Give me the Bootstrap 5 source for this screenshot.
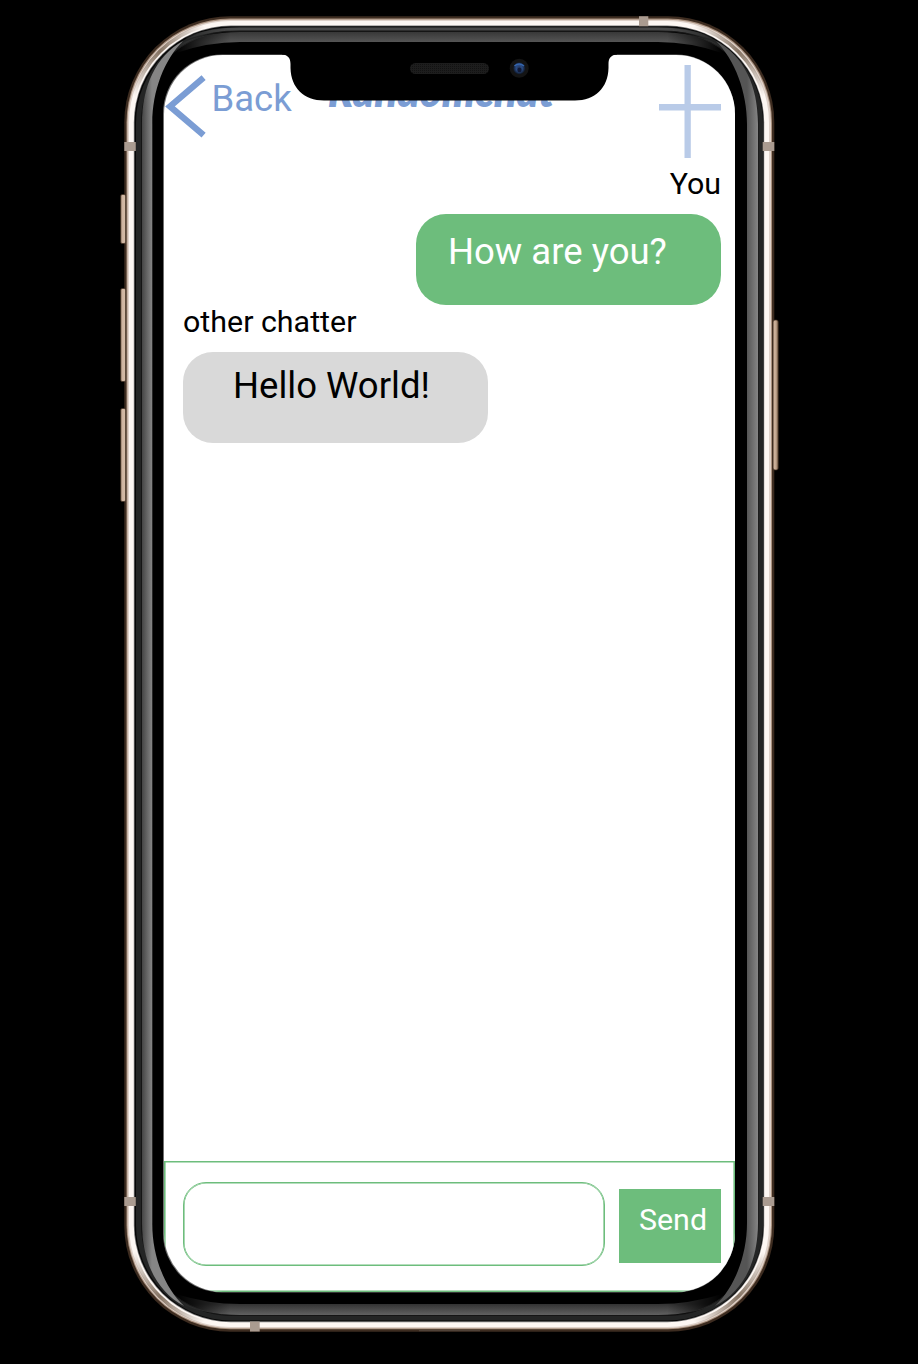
<!DOCTYPE html>
<html lang="en">
<head>
<meta charset="utf-8">
<meta name="viewport" content="width=device-width, initial-scale=1">
<title>Randomchat</title>
<link href="https://cdn.jsdelivr.net/npm/bootstrap@5.3.0/dist/css/bootstrap.min.css" rel="stylesheet">
<style>
  :root { --leaf: #6dbd7c; --sky: #7b9dd4; }
  body { background: #000; font-family: Roboto, sans-serif; color: #000; overflow: hidden; }
  .phone { width: 650px; height: 1316px; margin: 16px 0 0 124px; padding: 39px 39.5px 40px; }
  .phone-frame { left: -124px; top: -16px; pointer-events: none; }
  .screen { border-radius: 59px; background: #fff; }
  .topbar { height: 111.5px; color: var(--sky); }
  .back-link { color: var(--sky); }
  .back-label { font-size: 36.5px; line-height: 42px; margin: 23px 0 0 5px; }
  .app-title { font: italic 800 41.5px/48px Lato, sans-serif; margin: 12px 0 0 36px; white-space: nowrap; }
  .add-btn { margin: 10px 13.5px 0 auto; }
  .thread { padding: 0 13.5px 0 19.5px; }
  .author { font-size: 30.4px; line-height: 34px; }
  .bubble { width: 305px; height: 91px; border-radius: 30px; font-size: 36.5px; line-height: 42px; white-space: nowrap; }
  .bubble-me { background: var(--leaf); color: #fff; padding: 17px 0 0 32px; margin-top: 13.3px; }
  .bubble-other { background: #d9d9d9; padding: 13px 0 0 50px; margin-top: 13.2px; }
  .composer { height: 131px; border: 1px solid var(--leaf); box-shadow: inset 0 0 0 .6px var(--leaf); padding: 20px 12.5px 0 18.5px; }
  .composer .form-control { width: 422px; height: 84px; border: 1px solid var(--leaf); box-shadow: inset 0 0 0 .6px var(--leaf); border-radius: 23px; }
  .send-btn { width: 102px; height: 74px; margin: 7px 0 0 14px; background: var(--leaf); color: #fff; font-size: 30.4px; line-height: 34px; border: 0; border-radius: 0; padding: 0 0 13px 6px; }
</style>
</head>
<body>
<main class="phone position-relative">
  <div class="screen d-flex flex-column w-100 h-100 overflow-hidden position-relative z-1">
    <header class="topbar d-flex align-items-start flex-shrink-0">
      <a href="#" class="back-link d-flex align-items-start text-decoration-none">
        <svg width="43" height="90" viewBox="0 0 43 90" fill="none" stroke="#7b9dd4" stroke-width="6.3"><path d="M39.6 22.6 6 51.4 39.6 80.2"/></svg>
        <span class="back-label">Back</span>
      </a>
      <h1 class="app-title">Randomchat</h1>
      <svg class="add-btn" width="62" height="94" viewBox="0 0 62 94" fill="#b9cbe8"><path d="M25.5 0h6.3v93h-6.3zM0 39h62v6.4H0z"/></svg>
    </header>
    <section class="thread d-flex flex-column flex-grow-1">
      <div class="author align-self-end">You</div>
      <div class="bubble bubble-me align-self-end">How are you?</div>
      <div class="author align-self-start">other chatter</div>
      <div class="bubble bubble-other align-self-start">Hello World!</div>
    </section>
    <form class="composer d-flex align-items-start flex-shrink-0">
      <input type="text" class="form-control flex-shrink-0" aria-label="Message">
      <button type="button" class="btn send-btn flex-shrink-0">Send</button>
    </form>
  </div>

  <!-- phone body -->
  <svg class="phone-frame position-absolute" width="918" height="1364" viewBox="0 0 918 1364">
    <defs>
      <linearGradient id="side-l" gradientUnits="userSpaceOnUse" x1="142" x2="152"><stop stop-color="#454545"/><stop offset="1" stop-color="#858585"/></linearGradient>
      <linearGradient id="side-r" gradientUnits="userSpaceOnUse" x1="747" x2="758"><stop stop-color="#555"/><stop offset="1" stop-color="#858585"/></linearGradient>
      <linearGradient id="band-t" gradientUnits="userSpaceOnUse" x1="0" x2="0" y1="32" y2="42"><stop stop-color="#383838"/><stop offset="1" stop-color="#555"/></linearGradient>
      <linearGradient id="band-b" gradientUnits="userSpaceOnUse" x1="0" x2="0" y1="1304" y2="1315"><stop stop-color="#333"/><stop offset="1" stop-color="#616161"/></linearGradient>
      <linearGradient id="fade" gradientUnits="userSpaceOnUse" x1="176" x2="722"><stop stop-color="#000"/><stop offset=".1" stop-color="#fff"/><stop offset=".9" stop-color="#fff"/><stop offset="1" stop-color="#000"/></linearGradient>
      <linearGradient id="button-l" gradientUnits="userSpaceOnUse" x1="120" x2="126"><stop stop-color="#6d5745"/><stop offset=".35" stop-color="#cdb4a0"/><stop offset="1" stop-color="#d6bda9"/></linearGradient>
      <linearGradient id="button-r" gradientUnits="userSpaceOnUse" x1="772" x2="779"><stop stop-color="#8b7059"/><stop offset=".4" stop-color="#d2b8a2"/><stop offset=".7" stop-color="#a98d76"/><stop offset="1" stop-color="#3a2a1e"/></linearGradient>
      <linearGradient id="bend" gradientUnits="userSpaceOnUse" x1="134" y1="96" x2="204" y2="26"><stop stop-color="#857363" stop-opacity="0"/><stop offset=".5" stop-color="#857363"/><stop offset="1" stop-color="#857363" stop-opacity="0"/></linearGradient>
      <path id="bend-arc" d="M133.9 96.2A99.5 99.5 0 0 1 204.2 25.9" fill="none" stroke="url(#bend)" stroke-width="3.6"/>
      <mask id="fade-mask" maskUnits="userSpaceOnUse" x="0" y="0" width="918" height="1364"><rect width="918" height="1364" fill="url(#fade)"/></mask>
      <radialGradient id="lens"><stop stop-color="#26304f"/><stop offset=".5" stop-color="#2a4c86"/><stop offset="1" stop-color="#101827"/></radialGradient>
      <pattern id="grille" width="2" height="2" patternUnits="userSpaceOnUse"><rect width="2" height="2" fill="#1d1d1d"/><rect width="1" height="1" fill="#121212"/></pattern>
    </defs>
    <rect x="124.3" y="16.3" width="650" height="1315.4" rx="106" fill="#3d2c20"/>
    <rect x="126.5" y="18.5" width="645.5" height="1310.8" rx="104" fill="#a8907e"/>
    <rect x="127.5" y="19.7" width="643.5" height="1308.6" rx="103" fill="#dfd2ca"/>
    <rect x="129" y="21" width="640" height="1306" rx="102" fill="#fdf7f3"/>
    <g stroke="#3d2c20" stroke-width=".7">
      <g fill="url(#button-l)">
        <rect x="120.6" y="194.5" width="5" height="49" rx="1.5"/><rect x="120.6" y="288.5" width="5" height="93" rx="1.5"/><rect x="120.6" y="408.5" width="5" height="93" rx="1.5"/>
      </g>
      <rect x="773" y="320" width="5.3" height="150" rx="2" fill="url(#button-r)"/>
    </g>
    <use href="#bend-arc"/>
    <use href="#bend-arc" transform="matrix(-1 0 0 1 898 0)"/>
    <use href="#bend-arc" transform="matrix(1 0 0 -1 0 1348)"/>
    <use href="#bend-arc" transform="matrix(-1 0 0 -1 898 1348)"/>
    <rect x="133.8" y="25.6" width="630.4" height="1296.6" rx="97" fill="#777"/>
    <rect x="134.6" y="26.3" width="628.9" height="1295" rx="96" fill="#050505"/>
    <rect x="136" y="27.5" width="627" height="1293" rx="95" fill="#242525"/>
    <path d="M186 38Q212 28.9 240 28.9H658Q686 28.9 712 38" fill="none" stroke="#4a4a4a" stroke-width="2.6" mask="url(#fade-mask)"/>
    <rect x="141.5" y="31.5" width="616.5" height="1284" rx="90" fill="#000" stroke="#151515"/>
    <g mask="url(#fade-mask)">
      <path d="M176 46Q202 32 240 32H658Q696 32 722 46V53Q690 42 658 42H240Q208 42 176 53Z" fill="url(#band-t)"/>
      <path d="M176 1301Q202 1315 240 1315H658Q696 1315 722 1301V1294Q690 1304 658 1304H240Q208 1304 176 1294Z" fill="url(#band-b)"/>
    </g>
    <path d="M142 124C142 86 156 56 183 41 164 60 152 92 152.3 124V1223C152 1255 164 1287 184 1306 156 1291 142 1261 142 1223Z" fill="url(#side-l)"/>
    <path d="M758 124C758 86 744 56 716 41 735 60 747 92 747 124V1223C747 1255 735 1287 715 1306 744 1291 758 1261 758 1223Z" fill="url(#side-r)"/>
    <rect x="163" y="54.5" width="572" height="1238" rx="59" fill="#707070"/>
    <g fill="#aa9b90">
      <path d="M124.3 142h11.5v9h-11.5zM762.7 142h11.6v9h-11.6zM124.3 1197h11.5v9h-11.5zM762.7 1197h11.6v9h-11.6zM639 16.3h9.3v10H639zM250 1321.5h9.7v10H250z"/>
    </g>
    <path d="M419 1330.7h61" stroke="#55483e"/>
  </svg>

  <!-- notch laid over the header -->
  <svg class="phone-frame position-absolute z-2" width="918" height="130" viewBox="0 0 918 130">
    <path d="M282 54.5C288 55 290.5 58 290.5 64V68C291 88 304 100.5 324 100.5H575C595 100.5 608 88 608.5 68V64C608.5 58 611 55 617 54.5V53H282Z"/>
    <rect x="410" y="63" width="79" height="11" rx="5.5" fill="url(#grille)"/>
    <circle cx="519.2" cy="68.2" r="9.5" fill="#141414"/>
    <circle cx="519.2" cy="68.2" r="6" fill="url(#lens)"/>
    <path d="M514.5 66Q519 62 524 66" fill="none" stroke="#3666ad" stroke-width="1.6"/>
    <circle cx="519.5" cy="70" r="2.2" fill="#111a36"/>
  </svg>
</main>
<script src="https://cdn.jsdelivr.net/npm/bootstrap@5.3.0/dist/js/bootstrap.bundle.min.js"></script>
</body>
</html>
